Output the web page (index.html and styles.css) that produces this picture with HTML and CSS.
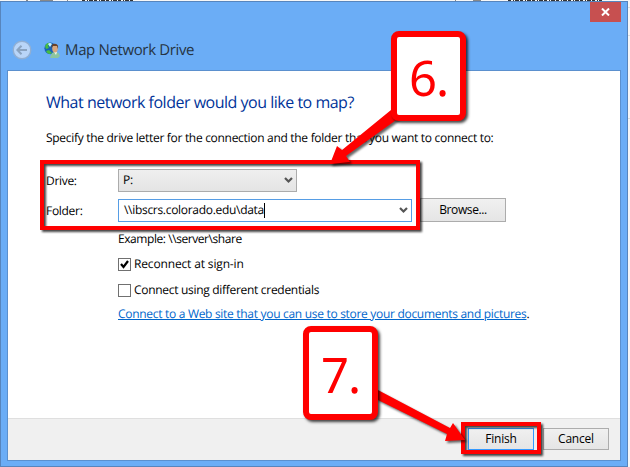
FILE: index.html
```
<!DOCTYPE html>
<html lang="en">
<head>
<meta charset="utf-8">
<title>Map Network Drive</title>
<link rel="stylesheet" href="styles.css">
</head>
<body>
<main class="window">
  <header class="titlebar">
    <button class="close" aria-label="Close"><svg width="9" height="8" viewBox="0 0 9 8"><path d="M1 .5 8 7.5M8 .5 1 7.5" stroke="#fff" stroke-width="2"/></svg></button>
    <div class="caption">
      <svg width="20" height="20" viewBox="0 0 20 20"><circle cx="10" cy="10" r="8.8" fill="#b9d5f8" stroke="#91afd3" stroke-width="1.4"/><path d="M15 10H6M9.5 5.8 5.4 10l4.1 4.2" fill="none" stroke="#8aa3c0" stroke-width="2"/></svg>
      <svg class="globe" width="16" height="16" viewBox="0 0 16 16"><circle cx="6.3" cy="6.3" r="5.9" fill="#1763b8"/><path d="M1 4Q3 0 6 1L4 4 5 6 2 7ZM2 9 5 8 8 11 6 12Q3 12 2 9Z" fill="#46bd42"/><path d="M4 2Q6 0 8 2L6 5Z" fill="#c8f4ff"/><path d="M6 15.5 8 11 11 9.5 14.5 11 16 14 14 16H7Z" fill="#8cc5a1"/><path d="m10 10 2 3 1-3" fill="#eff9ec"/><ellipse cx="11" cy="6.5" rx="2.8" ry="4" fill="#d8a77e"/><path d="M7.5 6Q7 1.4 11 1.7 15 2 13.9 7L13 4 9 4Z" fill="#67422c"/></svg>
      <h1>Map Network Drive</h1>
    </div>
  </header>
  <section class="client">
    <div class="content">
      <h2>What network folder would you like to map?</h2>
      <p class="intro">Specify the drive letter for the connection and the folder that you want to connect to:</p>
      <div class="row drive"><span class="label">Drive:</span><div class="select"><span>P:</span><svg width="9" height="8" viewBox="0 0 9 8"><path d="M1 2 4.5 5.5 8 2" fill="none" stroke="#555" stroke-width="2.2"/></svg></div></div>
      <div class="row folder"><span class="label">Folder:</span><div class="select input"><span class="path">\\ibscrs.colorado.edu\data</span><i class="caret"></i><svg width="9" height="8" viewBox="0 0 9 8"><path d="M1 2 4.5 5.5 8 2" fill="none" stroke="#555" stroke-width="2.2"/></svg></div><button class="button browse">Browse...</button></div>
      <div class="options">
        <p class="example">Example: \\server\share</p>
        <div class="option"><span class="check"><svg width="11" height="11" viewBox="0 0 11 11"><path d="M2 5 4.5 8 9 2" fill="none" stroke="#000" stroke-width="2.2"/></svg></span><span class="reconnect">Reconnect at sign-in</span></div>
        <div class="option second"><span class="check"></span><span class="credentials">Connect using different credentials</span></div>
        <p class="website"><a>Connect to a Web site that you can use to store your documents and pictures</a>.</p>
      </div>
    </div>
    <footer><button class="button finish">Finish</button><button class="button cancel">Cancel</button></footer>
  </section>
</main>
<svg class="backdrop" width="630" height="467" viewBox="0 0 630 467"><path d="M82 .5h52M508 .5h94" stroke="#333" stroke-dasharray="3 2 1 1 4 1"/><path d="M26 .5h2M40 .5h13M67 .5h1M455 .5h1M473 .5h8" stroke="#888"/><path d="M628 7.5h2M628 35.5h2M628 118.5h2" stroke="#ddd"/></svg>
<div class="mark fields"></div>
<div class="mark done"></div>
<svg class="arrows" width="630" height="467" viewBox="0 0 630 467"><path d="M330 164 337 146 342 150 391 110 399 118 346 156 350 162Z"/><path d="M465 440 453 423 450 428 376 389V399L447 434 445 441Z"/></svg>
<div class="callout six">6.</div>
<div class="callout seven">7.</div>
</body>
</html>
```
FILE: styles.css
```
* { box-sizing: border-box; }
body { margin: 0; width: 630px; height: 467px; padding-top: 1px; overflow: hidden; background: #f7f7f7; color: #000; font: 12px/16px "Open Sans", "Noto Sans", sans-serif; letter-spacing: -.3px; text-rendering: geometricPrecision; }
h1, h2, p { margin: 0; font-weight: 400; white-space: nowrap; }
button { margin: 0; font: inherit; color: inherit; letter-spacing: -.2px; }
.window { width: 628px; height: 466px; padding: 0 6px; border: 1px solid #5785bd; background: #6badf6; }
.titlebar { height: 68px; display: flex; flex-direction: column; }
.close { align-self: flex-end; flex: none; width: 31px; height: 20px; padding: 0; border: 0; background: #c75050; display: flex; align-items: center; justify-content: center; }
.caption { height: 20px; margin: 18px 0 0 5px; display: flex; align-items: center; }
.globe { margin-left: 12px; }
h1 { margin-left: 5px; font-size: 15px; line-height: 20px; letter-spacing: -.36px; color: #263442; }
.client { height: 391px; border: 1px solid #5b90ce; background: #fff; display: flex; flex-direction: column; }
.content { height: 347px; padding: 19px 0 0 38px; }
h2 { font-size: 16px; line-height: 24px; letter-spacing: -.49px; color: #003399; }
.intro { margin-top: 16px; }
.row { display: flex; align-items: center; height: 24px; }
.drive { margin-top: 22px; }
.folder { margin-top: 6px; }
.label { width: 72px; padding-top: 2px; }
.select { width: 179px; height: 23px; padding: 0 3px 0 4px; border: 1px solid #acacac; background: linear-gradient(#efefef, #e4e4e4); display: flex; align-items: center; }
.select svg { margin-left: auto; }
.input { width: 294px; padding-left: 5px; border-color: #569de5; background: #fff; }
.caret { width: 1px; height: 15px; background: #000; }
.button { border: 1px solid #acacac; background: linear-gradient(#f0f0f0, #e5e5e5); padding: 0; height: 22px; text-align: center; }
.browse { width: 86px; height: 24px; margin-left: 8px; letter-spacing: -.4px; }
.options { margin-left: 72px; padding-top: 9px; }
.example { letter-spacing: -.43px; }
.reconnect { letter-spacing: -.15px; }
.option { height: 16px; margin-top: 9px; display: flex; align-items: center; }
.second { margin-top: 10px; }
.check { width: 13px; height: 13px; margin-right: 3px; border: 1px solid #707070; display: flex; }
.website { margin-top: 8px; }
.website a { color: #0066cc; text-decoration: underline; }
footer { flex: 1; display: flex; gap: 9px; justify-content: flex-end; padding: 9px 11px 0 0; border-top: 1px solid #dfdfdf; background: #f0f0f0; }
.finish, .cancel { width: 66px; }
.finish { border-color: #3399ff; }
.backdrop, .arrows { position: absolute; left: 0; top: 0; }
.arrows { fill: #f00; filter: drop-shadow(2px 2px 1px #0009); }
.mark { position: absolute; border: 4px solid #f00; filter: drop-shadow(2px 2px 1px #000b); }
.fields { left: 40px; top: 160px; width: 380px; height: 70px; }
.done { left: 461px; top: 422px; width: 80px; height: 32px; }
.callout { position: absolute; padding-top: 4px; border: 6px solid #f00; border-radius: 8px; background: #fff; color: #f00; box-shadow: 2px 2px 3px #000b; display: flex; align-items: center; justify-content: center; font-family: "Noto Sans", sans-serif; font-size: 49px; line-height: 60px; letter-spacing: -1px; }
.six { left: 391px; top: 31px; width: 75px; height: 90px; }
.seven { left: 303px; top: 326px; width: 75px; height: 94px; }
```
